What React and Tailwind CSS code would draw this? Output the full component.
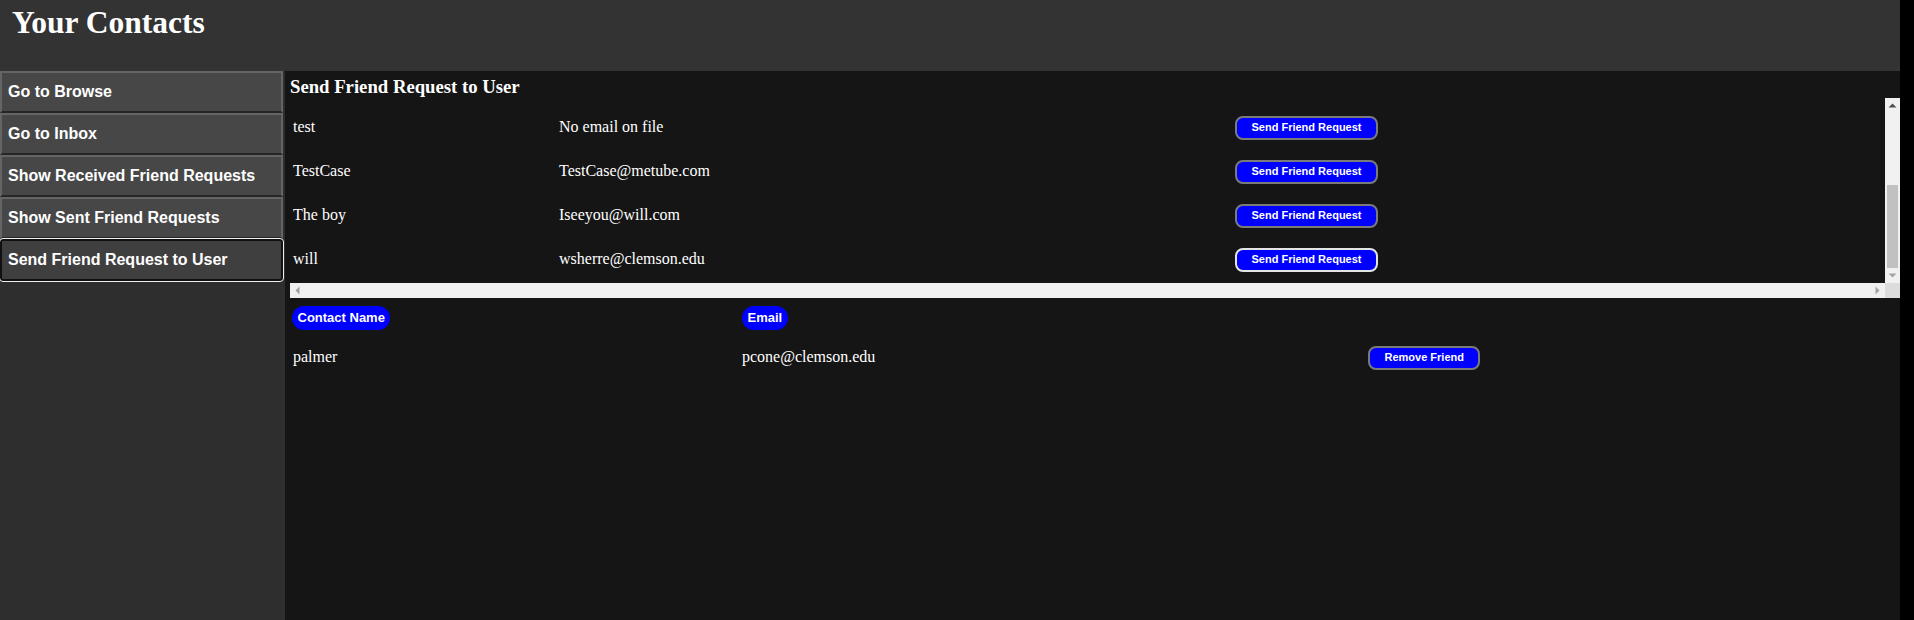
const SANS = "font-['Liberation_Sans',Arial,sans-serif]";
const SERIF = "font-['Liberation_Serif','Times_New_Roman',serif]";

function BlueBtn({ children, hover }) {
  return (
    <button
      className={`h-[24px] px-[14.5px] rounded-[8px] border-2 ${
        hover ? "border-[#e4e4e4]" : "border-[#7a7a7a]"
      } bg-[#0000ff] text-white text-[11px] font-bold leading-none whitespace-nowrap font-['Liberation_Sans',Arial,sans-serif]`}
    >
      {children}
    </button>
  );
}

function Pill({ children }) {
  return (
    <span className="inline-flex items-center h-[24px] px-[5.5px] rounded-[12px] bg-[#0000ff] text-white text-[13px] font-bold font-['Liberation_Sans',Arial,sans-serif]">
      {children}
    </span>
  );
}

function Arrow({ dir, color }) {
  const pts = {
    up: "0.5,5.5 4.5,1.5 8.5,5.5",
    down: "0.5,1.5 4.5,5.5 8.5,1.5",
    left: "5.5,0.5 1.5,4.5 5.5,8.5",
    right: "1.5,0.5 5.5,4.5 1.5,8.5",
  }[dir];
  const vertical = dir === "up" || dir === "down";
  return (
    <svg
      width={vertical ? 9 : 7}
      height={vertical ? 7 : 9}
      viewBox={vertical ? "0 0 9 7" : "0 0 7 9"}
    >
      <polygon points={pts} fill={color} />
    </svg>
  );
}

const navItems = [
  "Go to Browse",
  "Go to Inbox",
  "Show Received Friend Requests",
  "Show Sent Friend Requests",
  "Send Friend Request to User",
];

const users = [
  { name: "test", email: "No email on file" },
  { name: "TestCase", email: "TestCase@metube.com" },
  { name: "The boy", email: "Iseeyou@will.com" },
  { name: "will", email: "wsherre@clemson.edu", hover: true },
];

export default function App() {
  return (
    <div className="w-full h-screen overflow-hidden bg-black">
      <div className="w-[1900px] h-full flex flex-col">
        <header className="h-[71px] shrink-0 bg-[#333333] pt-[6px] pl-[12px]">
          <h1 className={`${SERIF} text-[31.5px] leading-[34px] font-bold text-white`}>
            Your Contacts
          </h1>
        </header>
        <div className="flex flex-1 min-h-0">
          <aside className="w-[285px] shrink-0 bg-[#2e2e2e] flex flex-col">
            {navItems.map((item, i) => {
              const active = i === navItems.length - 1;
              return (
                <button
                  key={item}
                  className={
                    active
                      ? `${SANS} h-[42px] w-[283px] text-left pl-[6px] bg-[#3f3f3f] border-2 border-[#111111] rounded-[3px] outline outline-1 outline-[#f0f0f0] text-white text-[16px] font-bold`
                      : `${SANS} h-[42px] w-[283px] text-left pl-[6px] bg-[#474747] border-2 border-[#656565] border-b-[#262626] text-white text-[16px] font-bold`
                  }
                >
                  {item}
                </button>
              );
            })}
          </aside>
          <main className="flex-1 bg-[#151515] pl-[5px] pt-[5px] min-w-0">
            <h3 className={`${SERIF} text-[18.72px] leading-[21px] font-bold text-white`}>
              Send Friend Request to User
            </h3>
            <div className="mt-[1px] w-[1610px] h-[200px] grid grid-cols-[1fr_15px] grid-rows-[185px_15px]">
              <div className="overflow-hidden pt-[7px]">
                {users.map((u) => (
                  <div
                    key={u.name}
                    className={`${SERIF} grid grid-cols-[266px_676px_1fr] pl-[3px] h-[44px] items-center text-[16px] text-white`}
                  >
                    <div>{u.name}</div>
                    <div>{u.email}</div>
                    <div>
                      <BlueBtn hover={u.hover}>Send Friend Request</BlueBtn>
                    </div>
                  </div>
                ))}
              </div>
              <div className="bg-[#f1f1f1] flex flex-col items-center">
                <div className="h-[15px] flex items-center justify-center">
                  <Arrow dir="up" color="#505050" />
                </div>
                <div className="flex-1 w-full flex flex-col justify-end px-[2px]">
                  <div className="h-[83px] bg-[#c1c1c1]" />
                </div>
                <div className="h-[15px] flex items-center justify-center">
                  <Arrow dir="down" color="#a3a3a3" />
                </div>
              </div>
              <div className="bg-[#f1f1f1] flex items-center justify-between">
                <div className="w-[15px] flex items-center justify-center">
                  <Arrow dir="left" color="#a3a3a3" />
                </div>
                <div className="w-[15px] flex items-center justify-center">
                  <Arrow dir="right" color="#a3a3a3" />
                </div>
              </div>
              <div className="bg-[#dcdcdc]" />
            </div>
            <div className="mt-[6px] pl-[2px]">
              <div className="grid grid-cols-[450px_626px_1fr] h-[24px] items-center">
                <div>
                  <Pill>Contact Name</Pill>
                </div>
                <div>
                  <Pill>Email</Pill>
                </div>
                <div />
              </div>
              <div
                className={`${SERIF} mt-[16px] grid grid-cols-[450px_626px_1fr] h-[24px] items-center text-[16px] text-white`}
              >
                <div className="pl-[1px]">palmer</div>
                <div>pcone@clemson.edu</div>
                <div>
                  <BlueBtn>Remove Friend</BlueBtn>
                </div>
              </div>
            </div>
          </main>
        </div>
      </div>
    </div>
  );
}
